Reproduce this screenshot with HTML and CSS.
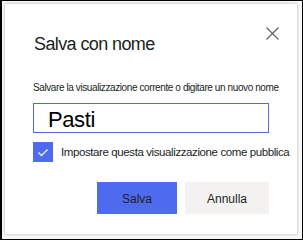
FILE: index.html
```html
<!DOCTYPE html>
<html lang="it">
<head>
    <meta charset="UTF-8">
    <meta name="viewport" content="width=device-width, initial-scale=1.0">
    <title>Salva con nome</title>
    <link rel="stylesheet" href="styles.css">
</head>
<body>
    <div class="frame">
        <div class="dialog">
            <div class="dialog-header">
                <h2>Salva con nome</h2>
                <button type="button" class="btn-close" aria-label="Chiudi">
                    <svg width="13" height="13" viewBox="0 0 13 13">
                        <path d="M0.5 0.5 L12.5 12.5 M12.5 0.5 L0.5 12.5" stroke="#605e5c" stroke-width="1.1" fill="none"/>
                    </svg>
                </button>
            </div>

            <p class="hint">Salvare la visualizzazione corrente o digitare un nuovo nome</p>
            <input type="text" class="name-input" value="Pasti">

            <label class="check-row">
                <span class="check-box">
                    <svg width="20" height="20" viewBox="0 0 20 20">
                        <path d="M5.5 10.5 L8.5 13.5 L14.5 7.5" stroke="#eef0ff" stroke-width="1.3" fill="none"/>
                    </svg>
                </span>
                <span class="check-label">Impostare questa visualizzazione come pubblica</span>
            </label>

            <div class="actions">
                <button type="button" class="btn-primary">Salva</button>
                <button type="button" class="btn-default">Annulla</button>
            </div>
        </div>
    </div>
</body>
</html>
```

FILE: styles.css
```css
:root {
    --accent: #4f6bed;
    --text: #201f1e;
    --neutral-bg: #f3f2f1;
}

* {
    box-sizing: border-box;
}

body {
    margin: 0;
    font-family: "Liberation Sans", Arial, sans-serif;
    color: var(--text);
}

.frame {
    width: 303px;
    height: 240px;
    border: 1px solid #000;
    border-left-width: 2px;
    background-color: #f8f8f8;
    padding: 3px 5px 3px 3px;
}

.dialog {
    background-color: #fff;
    box-shadow: 0 0 3px rgba(0, 0, 0, 0.28);
    height: 230px;
    padding: 28px 28px 20px 28px;
}

.dialog-header {
    display: flex;
    justify-content: space-between;
    align-items: flex-start;
}

.dialog-header h2 {
    margin: 0 0 0 1px;
    font-size: 18px;
    line-height: 24px;
    font-weight: normal;
    letter-spacing: -0.6px;
}

.btn-close {
    border: none;
    background: none;
    padding: 0;
    margin: -5px -10px 0 0;
    width: 13px;
    height: 13px;
    display: flex;
}

.hint {
    margin: 25px 0 8px 0;
    font-size: 10px;
    line-height: 14px;
    letter-spacing: -0.4px;
    white-space: nowrap;
}

.name-input {
    display: block;
    width: 100%;
    height: 30px;
    border: 1px solid var(--accent);
    border-radius: 0;
    padding: 4px 14px 0 14px;
    font-family: inherit;
    font-size: 22px;
    letter-spacing: -0.4px;
    color: #000;
    outline: none;
}

.check-row {
    display: flex;
    align-items: center;
    gap: 8px;
    margin-top: 9px;
}

.check-box {
    flex: none;
    width: 20px;
    height: 20px;
    background-color: var(--accent);
    display: flex;
}

.check-label {
    font-size: 11.5px;
    letter-spacing: -0.4px;
    white-space: nowrap;
}

.actions {
    display: flex;
    justify-content: flex-end;
    gap: 8px;
    margin-top: 20px;
}

.actions button {
    height: 32px;
    border: none;
    font-family: inherit;
    font-size: 12px;
    color: var(--text);
    padding: 2px 0 0 0;
}

.btn-primary {
    width: 80px;
    background-color: var(--accent);
}

.btn-default {
    width: 84px;
    background-color: var(--neutral-bg);
}
```
